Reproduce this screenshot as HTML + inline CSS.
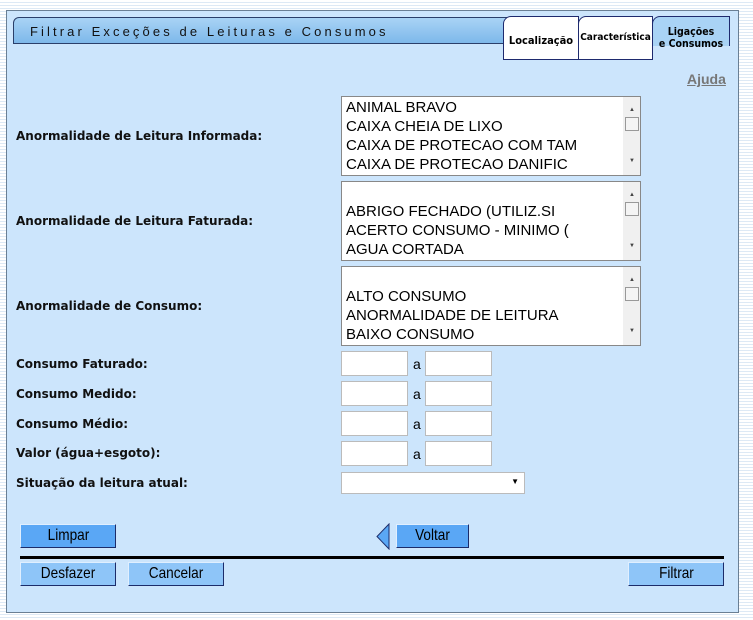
<!DOCTYPE html>
<html><head><meta charset="utf-8"><style>
body{margin:0;width:753px;height:620px;overflow:hidden;font-family:"Liberation Sans",Arial,sans-serif;
background:repeating-linear-gradient(180deg,#fff 0,#fff 2px,#dde9f5 2px,#dde9f5 3px);position:relative}
.a{position:absolute}
#panel{left:6px;top:10px;width:731px;height:601px;background:#cce5fc;border:1px solid #6a7f94}
#hdr{left:13px;top:17px;width:500px;height:27px;background:linear-gradient(#a9d3f5,#7db8ea);border:1px solid #2a3f6a;border-top-left-radius:6px;box-sizing:border-box;font-size:13px;letter-spacing:3.1px;color:#111;padding:6px 0 0 16px}
.tab{top:16px;height:44px;background:#fff;border:1px solid #1e2a6e;box-sizing:border-box;font-family:"DejaVu Sans Condensed","Liberation Sans",sans-serif;font-weight:bold;font-size:11px;text-align:center;color:#000;border-top-left-radius:8px}
.lbl{font-family:"DejaVu Sans",sans-serif;font-size:12px;font-weight:bold;color:#111}
.lb{left:341px;width:300px;height:80px;background:#fff;border:1px solid #888;box-sizing:border-box;font-size:15px;line-height:19px;padding:1px 0 0 4px;color:#000}
.sb{position:absolute;right:0;top:0;width:17px;height:100%;background:#f0f0f0}
.th{position:absolute;right:1px;width:14px;height:14px;top:20px;background:#f4f4f4;border:1px solid #999;box-sizing:border-box}
.ar{position:absolute;right:5px;font-size:6px;color:#444}
.in{width:67px;height:25px;background:#fff;border:1px solid #bbb;box-sizing:border-box}
.btn{height:24px;background:#5aa7f5;border:1px solid #1c2c6a;border-top-color:#e0efff;border-left-color:#e0efff;box-sizing:border-box;text-align:center;line-height:22px;color:#000}
.btn span{display:inline-block;font-size:16px;transform:scaleX(0.85)}
.b2{background:#8ec5f8}
</style></head><body>
<div id="panel" class="a"></div>
<div id="hdr" class="a">Filtrar Exceções de Leituras e Consumos</div>
<div class="a tab" style="left:503px;width:76px;padding-top:17px">Localização</div>
<div class="a tab" style="left:578px;width:75px;padding-top:15px;font-size:10px">Característica</div>
<div class="a tab" style="left:652px;top:16px;width:78px;height:30px;background:#a9d3f5;padding-top:9px;line-height:12px;font-size:10.5px;border-bottom:none">Ligações<br>e Consumos</div>
<div class="a" style="left:687px;top:71px;font-size:14px;font-weight:bold;color:#777;text-decoration:underline">Ajuda</div>

<div class="a lbl" style="left:16px;top:129px">Anormalidade de Leitura Informada:</div>
<div class="a lb" style="top:96px">ANIMAL BRAVO<br>CAIXA CHEIA DE LIXO<br>CAIXA DE PROTECAO COM TAM<br>CAIXA DE PROTECAO DANIFIC<div class="sb"><span class="ar" style="top:4px">▲</span><div class="th"></div><span class="ar" style="bottom:4px">▼</span></div></div>
<div class="a lbl" style="left:16px;top:214px">Anormalidade de Leitura Faturada:</div>
<div class="a lb" style="top:181px"><br>ABRIGO FECHADO (UTILIZ.SI<br>ACERTO CONSUMO - MINIMO (<br>AGUA CORTADA<div class="sb"><span class="ar" style="top:4px">▲</span><div class="th"></div><span class="ar" style="bottom:4px">▼</span></div></div>
<div class="a lbl" style="left:16px;top:299px">Anormalidade de Consumo:</div>
<div class="a lb" style="top:266px"><br>ALTO CONSUMO<br>ANORMALIDADE DE LEITURA<br>BAIXO CONSUMO<div class="sb"><span class="ar" style="top:4px">▲</span><div class="th"></div><span class="ar" style="bottom:4px">▼</span></div></div>

<div class="a lbl" style="left:16px;top:357px">Consumo Faturado:</div>
<div class="a lbl" style="left:16px;top:387px">Consumo Medido:</div>
<div class="a lbl" style="left:16px;top:417px">Consumo Médio:</div>
<div class="a lbl" style="left:16px;top:446px">Valor (água+esgoto):</div>
<div class="a lbl" style="left:16px;top:476px">Situação da leitura atual:</div>

<div class="a in" style="left:341px;top:351px"></div><div class="a" style="left:413px;top:356px;font-size:14px">a</div><div class="a in" style="left:425px;top:351px"></div>
<div class="a in" style="left:341px;top:381px"></div><div class="a" style="left:413px;top:386px;font-size:14px">a</div><div class="a in" style="left:425px;top:381px"></div>
<div class="a in" style="left:341px;top:411px"></div><div class="a" style="left:413px;top:416px;font-size:14px">a</div><div class="a in" style="left:425px;top:411px"></div>
<div class="a in" style="left:341px;top:441px"></div><div class="a" style="left:413px;top:446px;font-size:14px">a</div><div class="a in" style="left:425px;top:441px"></div>
<div class="a" style="left:341px;top:472px;width:184px;height:22px;background:#fff;border:1px solid #bbb;box-sizing:border-box"><span style="position:absolute;right:5px;top:4px;font-size:8px">▼</span></div>

<div class="a btn" style="left:20px;top:524px;width:96px"><span>Limpar</span></div>
<svg class="a" style="left:375px;top:523px" width="16" height="27"><polygon points="14,1 14,26 2,13.5" fill="#5aa7f5" stroke="#1c2c6a"/></svg>
<div class="a btn" style="left:396px;top:524px;width:73px"><span>Voltar</span></div>
<div class="a" style="left:20px;top:556px;width:704px;height:3px;background:#000"></div>
<div class="a btn b2" style="left:20px;top:562px;width:96px"><span>Desfazer</span></div>
<div class="a btn b2" style="left:128px;top:562px;width:96px"><span>Cancelar</span></div>
<div class="a btn b2" style="left:628px;top:562px;width:96px"><span>Filtrar</span></div>
</body></html>
